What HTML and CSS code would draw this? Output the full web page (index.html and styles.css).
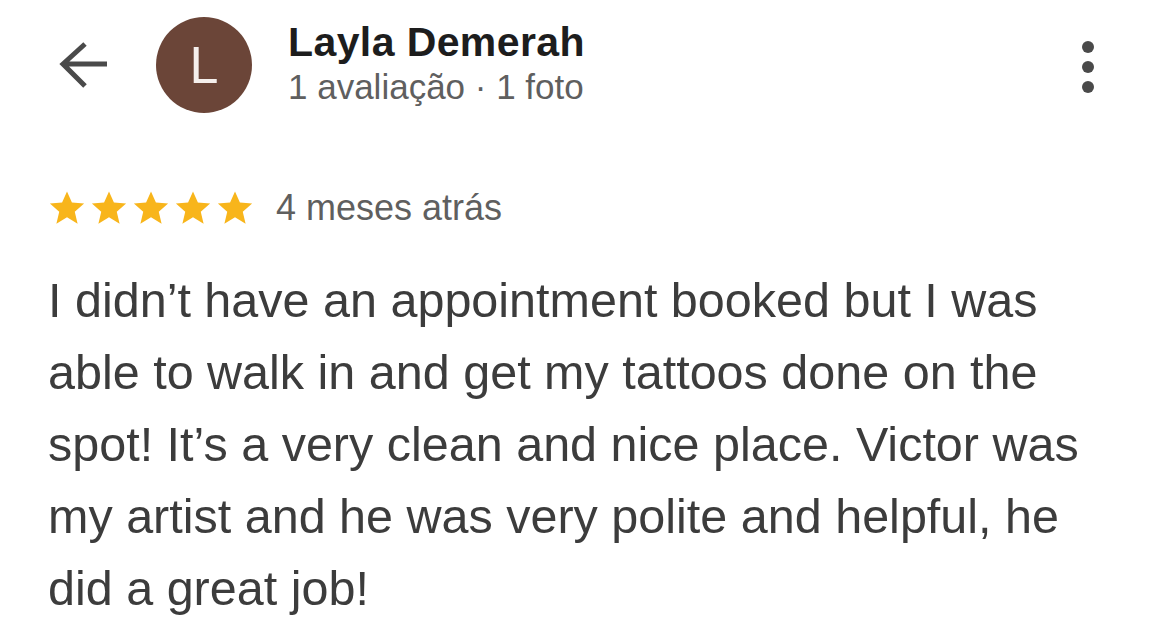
FILE: index.html
```html
<!DOCTYPE html>
<html lang="pt">
<head>
    <meta charset="UTF-8">
    <meta name="viewport" content="width=device-width, initial-scale=1.0">
    <title>Avaliação</title>
    <link rel="stylesheet" href="styles.css">
</head>
<body>
    <header class="top-bar">
        <button class="back" aria-label="Voltar">
            <svg width="54" height="50" viewBox="0 0 54 50">
                <path d="M50 23H6 M28 3L6 23L28 45" fill="none" stroke="#4a4a4a" stroke-width="5"/>
            </svg>
        </button>
        <div class="avatar">L</div>
        <div class="who">
            <div class="name">Layla Demerah</div>
            <div class="meta">1 avaliação · 1 foto</div>
        </div>
        <button class="more" aria-label="Mais opções">
            <span></span><span></span><span></span>
        </button>
    </header>

    <main class="review">
        <div class="rating">
            <div class="stars">
                <svg viewBox="0 0 24 24"><path d="M12 1.5l3.1 7.1 7.7.6-5.9 5.1 1.8 7.6L12 17.9l-6.7 4 1.8-7.6-5.9-5.1 7.7-.6z"/></svg>
                <svg viewBox="0 0 24 24"><path d="M12 1.5l3.1 7.1 7.7.6-5.9 5.1 1.8 7.6L12 17.9l-6.7 4 1.8-7.6-5.9-5.1 7.7-.6z"/></svg>
                <svg viewBox="0 0 24 24"><path d="M12 1.5l3.1 7.1 7.7.6-5.9 5.1 1.8 7.6L12 17.9l-6.7 4 1.8-7.6-5.9-5.1 7.7-.6z"/></svg>
                <svg viewBox="0 0 24 24"><path d="M12 1.5l3.1 7.1 7.7.6-5.9 5.1 1.8 7.6L12 17.9l-6.7 4 1.8-7.6-5.9-5.1 7.7-.6z"/></svg>
                <svg viewBox="0 0 24 24"><path d="M12 1.5l3.1 7.1 7.7.6-5.9 5.1 1.8 7.6L12 17.9l-6.7 4 1.8-7.6-5.9-5.1 7.7-.6z"/></svg>
            </div>
            <span class="when">4 meses atrás</span>
        </div>
        <p class="text">I didn’t have an appointment booked but I was able to walk in and get my tattoos done on the spot! It’s a very clean and nice place. Victor was my artist and he was very polite and helpful, he did a great job!</p>
    </main>
</body>
</html>
```

FILE: styles.css
```css
body {
    margin: 0;
    background: #fff;
    font-family: "Liberation Sans", Arial, sans-serif;
    color: #3c3c3c;
}

button {
    background: none;
    border: 0;
    padding: 0;
    cursor: pointer;
}

.top-bar {
    display: flex;
    align-items: center;
    padding: 17px 0 0 57px;
    height: 96px;
}

.back {
    display: flex;
    width: 54px;
    height: 50px;
    margin-top: 2px;
}

.avatar {
    width: 96px;
    height: 96px;
    margin-left: 45px;
    border-radius: 50%;
    background: #6b4538;
    color: #f5efec;
    font-size: 52px;
    display: flex;
    align-items: center;
    justify-content: center;
}

.who {
    margin-left: 36px;
}

.name {
    font-size: 41px;
    font-weight: bold;
    letter-spacing: 0.4px;
    color: #1d1d1d;
    line-height: 44px;
}

.meta {
    font-size: 35px;
    color: #5f5f5f;
    line-height: 46px;
}

.more {
    margin-left: auto;
    margin-right: 76px;
    margin-top: 4px;
    display: flex;
    flex-direction: column;
    gap: 8px;
}

.more span {
    width: 12px;
    height: 12px;
    border-radius: 50%;
    background: #4a4a4a;
}

.review {
    padding: 0 70px 0 48px;
}

.rating {
    display: flex;
    align-items: center;
    margin-top: 74px;
}

.stars {
    display: flex;
    gap: 4px;
}

.stars svg {
    width: 38px;
    height: 38px;
    fill: #f8b51b;
}

.when {
    margin-left: 22px;
    font-size: 36px;
    color: #5f5f5f;
}

.text {
    margin: 35px 0 0;
    font-size: 48.5px;
    line-height: 72px;
    color: #3c3c3c;
}
```
